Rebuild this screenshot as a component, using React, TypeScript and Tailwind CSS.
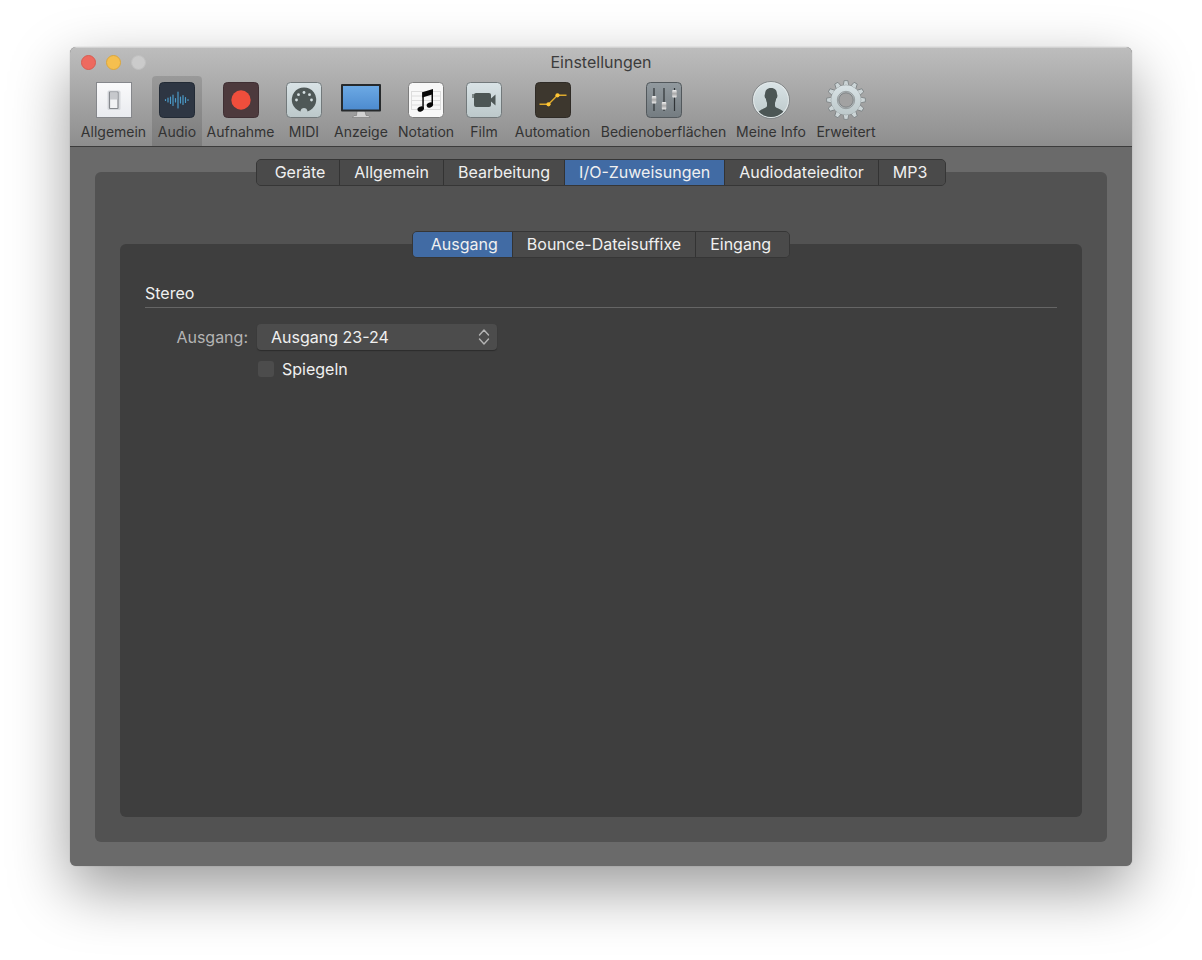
import { useState } from "react";
import type { ReactNode } from "react";

type ToolbarEntry = {
  label: string;
  width: string;
  icon: ReactNode;
};

type SegmentedTabsProps = {
  label: string;
  tabs: string[];
  active: string;
  onSelect: (tab: string) => void;
};

const SwitchIcon = () => (
  <svg width="40" height="40" viewBox="0 0 40 40" aria-hidden="true">
    <defs>
      <linearGradient id="plate" x1="0" y1="0" x2="0" y2="1">
        <stop offset="0" stopColor="#fafafb" />
        <stop offset="1" stopColor="#e9ebef" />
      </linearGradient>
    </defs>
    <rect x="2.5" y="2.5" width="35" height="35" fill="url(#plate)" stroke="#85878b" />
    <rect x="13.5" y="10.5" width="13" height="19.5" rx="1.5" fill="#d5d8dc" />
    <rect x="15.5" y="12" width="8.5" height="16.5" rx=".5" fill="#f1f2f4" stroke="#85888d" strokeWidth="1.2" />
    <rect x="16" y="12.5" width="7.5" height="7" fill="#c6c8cc" />
  </svg>
);

const AudioIcon = () => (
  <svg width="40" height="40" viewBox="0 0 40 40" aria-hidden="true">
    <rect x="2.5" y="2.5" width="35" height="35" rx="4" fill="#2e3643" stroke="#222a35" />
    <g stroke="#4b9bc9" strokeWidth="1.2" strokeLinecap="round">
      <path d="M8.5 19.5v1M11 18v4M13.5 17v6.5M16 15v10.5M18.5 18.5v3.5M21 12v16M23.5 17v6M26 15.5v9M28.5 17.5v5M31 19.5v1" />
    </g>
  </svg>
);

const RecordIcon = () => (
  <svg width="40" height="40" viewBox="0 0 40 40" aria-hidden="true">
    <rect x="2.5" y="2.5" width="35" height="35" rx="4" fill="#4d3a3d" stroke="#3f2f33" />
    <circle cx="20" cy="20" r="9.7" fill="#ef4e3c" />
  </svg>
);

const MidiIcon = () => (
  <svg width="40" height="40" viewBox="0 0 40 40" aria-hidden="true">
    <defs>
      <linearGradient id="pale" x1="0" y1="0" x2="0" y2="1">
        <stop offset="0" stopColor="#d9e3e6" />
        <stop offset="1" stopColor="#bcc8ca" />
      </linearGradient>
    </defs>
    <rect x="2.5" y="2.5" width="35" height="35" rx="4" fill="url(#pale)" stroke="#72797b" />
    <path d="M16.5 31.4A12.2 12.2 0 1 1 23.5 31.4C23.3 26.8 16.7 26.8 16.5 31.4Z" fill="#4f5857" />
    <g fill="#d5dfe1">
      <circle cx="12.5" cy="20" r="1.4" />
      <circle cx="14.5" cy="14.7" r="1.4" />
      <circle cx="20" cy="12.5" r="1.4" />
      <circle cx="25.5" cy="14.7" r="1.4" />
      <circle cx="27.5" cy="20" r="1.4" />
    </g>
  </svg>
);

const DisplayIcon = () => (
  <svg width="42" height="40" viewBox="0 0 42 40" aria-hidden="true">
    <defs>
      <linearGradient id="screen" x1="0" y1="0" x2="0" y2="1">
        <stop offset="0" stopColor="#6ca9e4" />
        <stop offset="1" stopColor="#4d8bcf" />
      </linearGradient>
    </defs>
    <path d="M17 31h8l1 4.5h2.5l1.5 2H12.5l1.5-2h2.5z" fill="#d2d2d2" stroke="#777" strokeWidth=".6" />
    <rect x="1" y="4" width="40" height="27.5" rx="1" fill="#272a2c" />
    <rect x="3" y="6" width="36" height="23.5" fill="url(#screen)" />
  </svg>
);

const NotationIcon = () => (
  <svg width="40" height="40" viewBox="0 0 40 40" aria-hidden="true">
    <rect x="2.5" y="2.5" width="35" height="35" rx="4" fill="#f8f8f8" stroke="#7d7d7d" />
    <path d="M5 11.5h30M5 16h30M5 20.5h30M5 25h30M5 29.5h30M5.5 11.5v18M34.5 11.5v18" stroke="#dcdcdc" />
    <g fill="#080808">
      <path d="M16.3 12.3 27 9v5.2l-10.7 3.3z" />
      <path d="M16.3 12.3h1.5V29h-1.5zM25.5 10H27v15h-1.5z" />
      <ellipse cx="14.7" cy="29" rx="3.3" ry="2.5" transform="rotate(-25 14.7 29)" />
      <ellipse cx="23.9" cy="25" rx="3.3" ry="2.5" transform="rotate(-25 23.9 25)" />
    </g>
  </svg>
);

const FilmIcon = () => (
  <svg width="40" height="40" viewBox="0 0 40 40" aria-hidden="true">
    <rect x="2.5" y="2.5" width="35" height="35" rx="4" fill="url(#pale)" stroke="#72797b" />
    <rect x="8" y="14" width="4" height="4" fill="#7d8786" />
    <rect x="10" y="13" width="17" height="14" rx="2" fill="#4d5655" />
    <path d="M27 18.5 31.5 14.5v11L27 21.5z" fill="#4d5655" />
  </svg>
);

const AutomationIcon = () => (
  <svg width="40" height="40" viewBox="0 0 40 40" aria-hidden="true">
    <rect x="2.5" y="2.5" width="35" height="35" rx="4" fill="#3d372e" stroke="#2f2b26" />
    <path d="M6.5 24.3H15.5L24.5 15.3H33.5" fill="none" stroke="#dda92d" strokeWidth="1.4" />
    <circle cx="15.5" cy="24.3" r="2.1" fill="#ffc534" />
    <circle cx="24.5" cy="15.3" r="2.1" fill="#ffc534" />
  </svg>
);

const FadersIcon = () => (
  <svg width="40" height="40" viewBox="0 0 40 40" aria-hidden="true">
    <defs>
      <linearGradient id="console" x1="0" y1="0" x2="0" y2="1">
        <stop offset="0" stopColor="#929a9f" />
        <stop offset="1" stopColor="#747c81" />
      </linearGradient>
      <linearGradient id="knob" x1="0" y1="0" x2="0" y2="1">
        <stop offset="0" stopColor="#f3f3f3" />
        <stop offset=".5" stopColor="#a8a8a8" />
        <stop offset="1" stopColor="#ededed" />
      </linearGradient>
    </defs>
    <rect x="2.5" y="2.5" width="35" height="35" rx="4" fill="url(#console)" stroke="#52585c" />
    <path d="M10 8v23M20 8v23M30.5 8v23" stroke="#303437" strokeWidth="1.2" />
    <rect x="7.8" y="16" width="4.5" height="7.5" rx="1" fill="url(#knob)" />
    <rect x="17.8" y="22" width="4.5" height="7.5" rx="1" fill="url(#knob)" />
    <rect x="28.2" y="10" width="4.5" height="7.5" rx="1" fill="url(#knob)" />
  </svg>
);

const PersonIcon = () => (
  <svg width="40" height="40" viewBox="0 0 40 40" aria-hidden="true">
    <defs>
      <clipPath id="portrait">
        <circle cx="20" cy="20" r="17" />
      </clipPath>
    </defs>
    <circle cx="20" cy="20" r="18.5" fill="#e4eaeb" stroke="#73797b" strokeWidth=".8" />
    <circle cx="20" cy="20" r="17" fill="url(#pale)" />
    <path
      clipPath="url(#portrait)"
      d="M20 8c-4 0-6 2.3-6 6.3-.8.6-.4 3.6.8 4.2.3 2 .7 3.2 1.2 4.2v3.4C15.5 29 8 28.5 6.5 34v4h27v-4C32 28.5 24.5 29 24 26.100v-3.400c.5-1 .9-2.200 1.200-4.200 1.200-.6 1.600-3.600.8-4.200C26 10.300 24 8 20 8Z"
      fill="#4c5655"
    />
  </svg>
);

const GearIcon = () => (
  <svg width="40" height="40" viewBox="0 0 40 40" aria-hidden="true">
    <g stroke="#7a8082" strokeWidth=".8" fill="#ccd5d7">
      {Array.from({ length: 12 }, (_, i) => (
        <path key={i} d="M16.8 7 18.2 .6h3.6L23.2 7z" transform={`rotate(${i * 30} 20 20)`} />
      ))}
      <circle cx="20" cy="20" r="14.8" />
    </g>
    <circle cx="20" cy="20" r="14.8" fill="url(#pale)" />
    <circle cx="20" cy="20" r="8.7" fill="#b4bbbd" stroke="#868c8e" strokeWidth=".7" />
    <circle cx="20" cy="20" r="7.2" fill="#a2a2a2" stroke="#73797b" strokeWidth=".8" />
  </svg>
);

const toolbar: ToolbarEntry[] = [
  { label: "Allgemein", width: "w-[77px]", icon: <SwitchIcon /> },
  { label: "Audio", width: "w-[50px]", icon: <AudioIcon /> },
  { label: "Aufnahme", width: "w-[77px]", icon: <RecordIcon /> },
  { label: "MIDI", width: "w-[50px]", icon: <MidiIcon /> },
  { label: "Anzeige", width: "w-[64px]", icon: <DisplayIcon /> },
  { label: "Notation", width: "w-[66px]", icon: <NotationIcon /> },
  { label: "Film", width: "w-[50px]", icon: <FilmIcon /> },
  { label: "Automation", width: "w-[87px]", icon: <AutomationIcon /> },
  { label: "Bedienoberflächen", width: "w-[135px]", icon: <FadersIcon /> },
  { label: "Meine Info", width: "w-[80px]", icon: <PersonIcon /> },
  { label: "Erweitert", width: "w-[70px]", icon: <GearIcon /> },
];

const audioTabs = ["Geräte", "Allgemein", "Bearbeitung", "I/O-Zuweisungen", "Audiodateieditor", "MP3"];
const assignmentTabs = ["Ausgang", "Bounce-Dateisuffixe", "Eingang"];
const outputs = ["Ausgang 1-2", "Ausgang 21-22", "Ausgang 23-24"];

const SegmentedTabs: React.FC<SegmentedTabsProps> = ({ label, tabs, active, onSelect }) => {
  return (
    <div
      role="tablist"
      aria-label={label}
      className="relative z-10 -mb-3.5 flex h-[27px] self-center overflow-hidden rounded-[5px] border border-[#363636] bg-[#4a4a4a]"
    >
      {tabs.map((tab) => (
        <button
          key={tab}
          role="tab"
          aria-selected={tab === active}
          onClick={() => onSelect(tab)}
          className={`border-r border-[#333333] px-3.5 pb-0.5 text-base leading-6 whitespace-nowrap text-[#f0f0f0] first:pl-[18px] last:border-r-0 last:pr-[18px] ${
            tab === active ? "bg-[#416ba4]" : "bg-[#4a4a4a]"
          }`}
        >
          {tab}
        </button>
      ))}
    </div>
  );
};

const App = () => {
  const [section, setSection] = useState("Audio");
  const [audioTab, setAudioTab] = useState("I/O-Zuweisungen");
  const [assignmentTab, setAssignmentTab] = useState("Ausgang");
  const [output, setOutput] = useState("Ausgang 23-24");
  const [mirror, setMirror] = useState(false);

  return (
    <div className="flex min-h-screen flex-col bg-white px-[70px] pt-[47px] pb-[94px] font-['Inter',sans-serif]">
      <main className="flex flex-1 flex-col overflow-hidden rounded-md bg-[#6a6a6a] shadow-[0_0_1px_rgba(0,0,0,0.4),0_23px_60px_rgba(0,0,0,0.4)]">
        <header className="flex h-[100px] flex-col justify-between border-t border-b border-t-[#d2d2d2] border-b-[#3c3c3c] bg-linear-to-b from-[#bdbdbd] to-[#8e8e8e]">
          <div className="grid grid-cols-[1fr_auto_1fr] items-center pt-0.5">
            <div className="flex gap-2.5 pl-[11px]">
              <button aria-label="Schließen" className="size-[15px] rounded-full border border-[#d95c50] bg-[#ee6a5f]" />
              <button aria-label="Minimieren" className="size-[15px] rounded-full border border-[#dba63c] bg-[#f5bf4f]" />
              <button aria-label="Zoomen" className="size-[15px] rounded-full border border-[#c0c0c0] bg-[#cbcbcb]" />
            </div>
            <h1 className="text-base leading-6 text-[#3c3c3c]">Einstellungen</h1>
          </div>
          <nav className="flex pl-[5px]">
            {toolbar.map(({ label, width, icon }) => (
              <button
                key={label}
                onClick={() => setSection(label)}
                className={`flex h-[70px] flex-col items-center rounded-t pt-1 text-sm leading-6 whitespace-nowrap text-[#333333] ${width} ${
                  section === label ? "bg-black/12" : ""
                }`}
              >
                {icon}
                {label}
              </button>
            ))}
          </nav>
        </header>

        <div className="flex flex-1 flex-col px-[25px] pt-3 pb-6">
          <SegmentedTabs label="Audio" tabs={audioTabs} active={audioTab} onSelect={setAudioTab} />
          <section className="flex flex-1 flex-col rounded-md bg-[#525252] px-[25px] pt-[59px] pb-[25px]">
            <SegmentedTabs
              label="Zuweisungen"
              tabs={assignmentTabs}
              active={assignmentTab}
              onSelect={setAssignmentTab}
            />
            <div className="flex-1 rounded-md bg-[#3e3e3e] px-[25px] pt-[37px] text-base leading-6 text-[#f0f0f0]">
              <h2 className="border-b border-[#656565] pb-0.5">Stereo</h2>
              <div className="mt-4 flex items-center gap-[9px]">
                <label htmlFor="output" className="w-[103px] text-right text-[#b4b4b4]">
                  Ausgang:
                </label>
                <div className="relative">
                  <select
                    id="output"
                    value={output}
                    onChange={(e) => setOutput(e.target.value)}
                    className="block h-[26px] w-60 appearance-none rounded bg-[#4c4c4c] pl-3.5 text-[#f0f0f0] shadow-[0_1px_1px_#2c2c2c]"
                  >
                    {outputs.map((name) => (
                      <option key={name}>{name}</option>
                    ))}
                  </select>
                  <svg
                    width="12"
                    height="16"
                    viewBox="0 0 12 16"
                    fill="none"
                    stroke="#b4b4b4"
                    strokeWidth="1.4"
                    strokeLinecap="round"
                    strokeLinejoin="round"
                    className="pointer-events-none absolute top-[5px] right-[7px]"
                    aria-hidden="true"
                  >
                    <path d="M1.5 6 6 1l4.5 5M1.5 10 6 15l4.5-5" />
                  </svg>
                </div>
              </div>
              <label className="mt-[7px] ml-[113px] flex w-fit items-center gap-2">
                <input
                  type="checkbox"
                  checked={mirror}
                  onChange={(e) => setMirror(e.target.checked)}
                  className="size-4 appearance-none rounded-[3px] bg-[#4c4c4c] checked:bg-[#416ba4]"
                />
                Spiegeln
              </label>
            </div>
          </section>
        </div>
      </main>
    </div>
  );
};

export default App;
